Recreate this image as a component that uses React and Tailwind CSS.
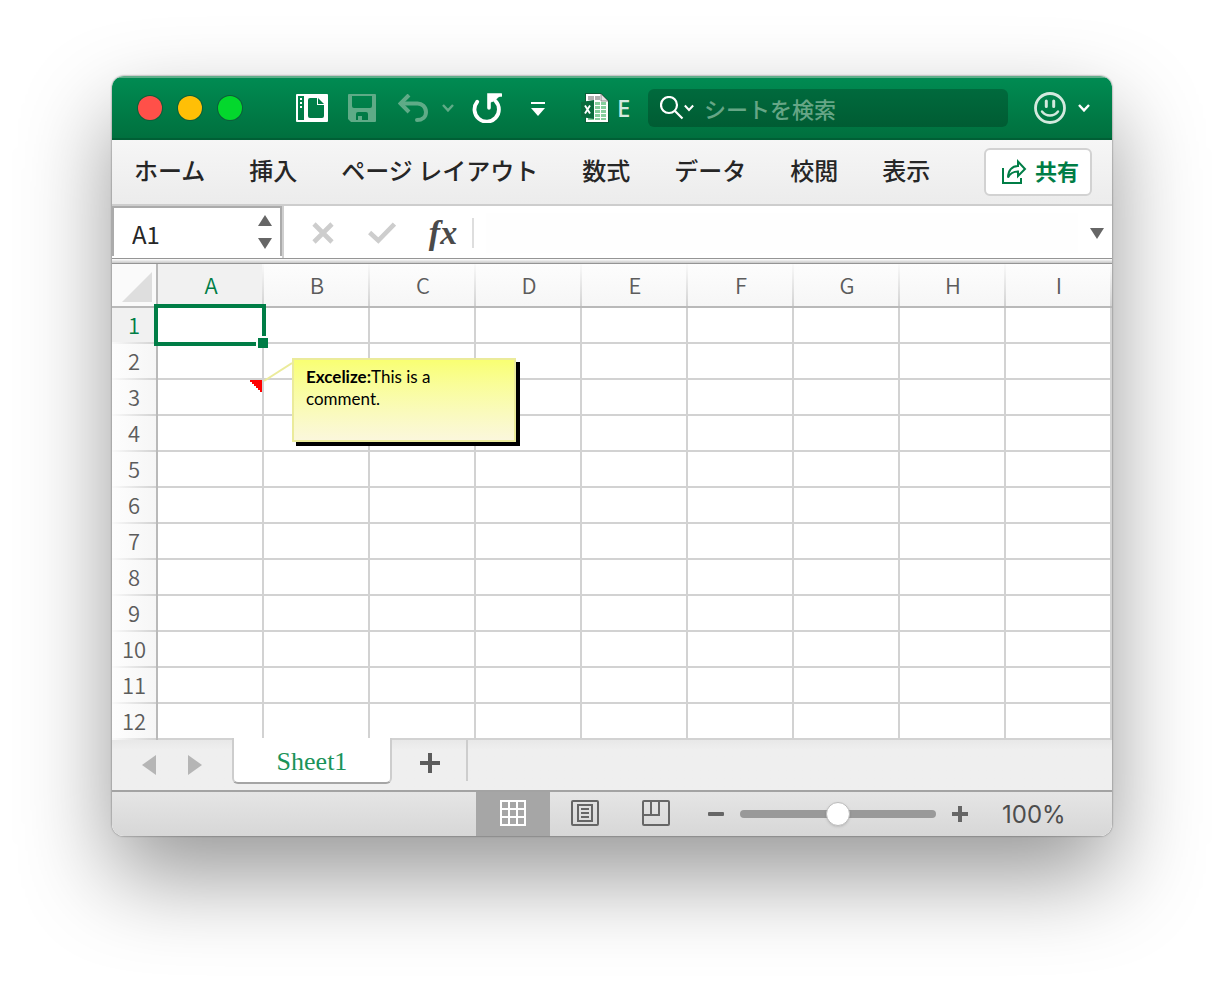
import React, { useState } from 'react';
import clsx from 'clsx';

const COLUMNS = ['A', 'B', 'C', 'D', 'E', 'F', 'G', 'H', 'I'];
const ROWS = Array.from({ length: 12 }, (_, i) => i + 1);
const TABS = ['ホーム', '挿入', 'ページ レイアウト', '数式', 'データ', '校閲', '表示'];

function Chevron({ className }) {
  return (
    <svg viewBox="0 0 12 8" className={clsx('w-3 h-2', className)} fill="none" stroke="currentColor" strokeWidth="2.4">
      <path d="M1 1l5 5.4L11 1" />
    </svg>
  );
}

function SidebarIcon() {
  return (
    <svg viewBox="0 0 32 28" className="w-8 h-7">
      <path
        fill="#fff"
        fillRule="evenodd"
        d="M1 0h30a1 1 0 0 1 1 1v26a1 1 0 0 1-1 1H1a1 1 0 0 1-1-1V1a1 1 0 0 1 1-1zM2 2v24h6V2zM14 4a2 2 0 0 0-2 2v16a2 2 0 0 0 2 2h12a2 2 0 0 0 2-2V11h-7V4z"
      />
      <path fill="#007d46" d="M22 4l6 6h-6z" />
      <path fill="#fff" d="M4 4h2v2H4zM4 8h2v2H4zM4 12h2v2H4z" />
    </svg>
  );
}

function SaveIcon() {
  return (
    <svg viewBox="0 0 28 28" className="w-7 h-7 text-[#5fab87]">
      <path
        fill="currentColor"
        fillRule="evenodd"
        d="M1 0h26a1 1 0 0 1 1 1v26a1 1 0 0 1-1 1H3l-3-3V1a1 1 0 0 1 1-1zM4 2v10a2 2 0 0 0 2 2h16a2 2 0 0 0 2-2V2zM8 26h2v-4h4v4h6v-6a2 2 0 0 0-2-2h-8a2 2 0 0 0-2 2z"
      />
    </svg>
  );
}

function UndoIcon() {
  return (
    <svg viewBox="0 0 30 28" className="w-[30px] h-7 text-[#5fab87]" fill="none" stroke="currentColor" strokeWidth="4">
      <path d="M11 1L2.500 9.500l8.500 8.500" />
      <path d="M3 9.500h16a8.500 8.500 0 0 1 9 8.500c0 5-4 8-9 8" strokeLinecap="round" />
    </svg>
  );
}

function RedoIcon() {
  return (
    <svg viewBox="0 0 30 30" className="w-[30px] h-[30px]" fill="none" stroke="#fff">
      <path d="M5.200 8.800A12.200 12.200 0 1 0 23.500 8" strokeWidth="3.800" strokeLinecap="round" />
      <path d="M17 15V2h12" strokeWidth="3.600" strokeLinecap="round" />
      <path d="M17 2h11.500l-6 5.500-5 2z" fill="#fff" strokeWidth="1" />
    </svg>
  );
}

function WorkbookIcon() {
  return (
    <svg viewBox="0 0 28 30" className="w-7 h-[30px]">
      <path d="M4 0h16l8 8v22H4z" fill="#0b5c37" />
      <path d="M5 1h15l7 7v21H5z" fill="#fff" />
      <path d="M7 3h6v4H7zM14 3h5v4h-5z" fill="#b0b0b0" />
      <path d="M20 1v7h7z" fill="#e4e4e4" stroke="#777" strokeWidth=".8" />
      <path
        d="M14 9h5v3h-5zM20 9h5v3h-5zM14 13h5v3h-5zM20 13h5v3h-5zM14 17h5v3h-5zM20 17h5v3h-5zM14 21h5v3h-5zM20 21h5v3h-5zM7 25h6v2H7zM14 25h5v2h-5zM20 25h5v2h-5z"
        fill="#86cf9d"
      />
      <path d="M0 9l13-2v19L0 24z" fill="#0a6b3d" />
      <path d="M4 12.500l5 8M9 12.500l-5 8" stroke="#fff" strokeWidth="1.900" />
    </svg>
  );
}

function SmileIcon() {
  return (
    <svg viewBox="0 0 32 32" className="w-8 h-8" fill="none" stroke="#d3e9de">
      <circle cx="16" cy="16" r="14.500" strokeWidth="2.800" />
      <path d="M12.300 9v5.500M19.700 9v5.500" strokeWidth="3" strokeLinecap="round" />
      <path d="M8 19.500c4 5.300 12 5.300 16 0" strokeWidth="2.400" strokeLinecap="round" />
    </svg>
  );
}

function TitleBar() {
  return (
    <header className="flex items-center h-16 pl-[26px] pr-[22px] text-white bg-linear-to-b from-[#008b52] to-[#00703e] border-t-2 border-t-[#5fae8a] border-b-2 border-b-[#005f35]">
      <div className="flex gap-4">
        <button aria-label="Close" className="size-6 rounded-full bg-[#ff5049] ring-1 ring-[#0b5f3a]" />
        <button aria-label="Minimize" className="size-6 rounded-full bg-[#ffbf06] ring-1 ring-[#0b5f3a]" />
        <button aria-label="Zoom window" className="size-6 rounded-full bg-[#03d82d] ring-1 ring-[#0b5f3a]" />
      </div>
      <div className="flex items-center ml-[54px]">
        <button aria-label="Gallery"><SidebarIcon /></button>
        <button aria-label="Save" className="ml-5"><SaveIcon /></button>
        <button aria-label="Undo" className="ml-[22px]"><UndoIcon /></button>
        <button aria-label="Undo list" className="ml-[14px] text-[#5fab87]"><Chevron /></button>
        <button aria-label="Redo" className="ml-[18px]"><RedoIcon /></button>
        <button aria-label="Customize toolbar" className="ml-7">
          <svg viewBox="0 0 16 16" className="size-4" fill="#fff">
            <path d="M1 2h14v2H1zM1 8h14l-7 8z" />
          </svg>
        </button>
      </div>
      <div className="flex items-center ml-[35px] gap-2">
        <WorkbookIcon />
        <span className="w-3 font-['Noto_Sans'] text-2xl leading-8 font-medium text-[#d3e9de]">E</span>
      </div>
      <div className="flex flex-1 items-center min-w-0 h-[38px] ml-[19px] mr-[26px] pl-3 rounded-md bg-linear-to-b from-[#006a3d] to-[#005c33]">
        <svg viewBox="0 0 24 24" className="size-6 shrink-0" fill="none" stroke="#fff" strokeWidth="2.200">
          <circle cx="9" cy="9" r="8" />
          <path d="M15 15l7.500 7.500" />
        </svg>
        <Chevron className="shrink-0 w-[10px]" />
        <input
          type="text"
          aria-label="シートを検索"
          placeholder="シートを検索"
          className="flex-1 min-w-0 ml-[10px] text-[22px] font-medium text-white placeholder:font-medium placeholder:text-[#66a686] focus:outline-none"
        />
      </div>
      <button aria-label="Feedback" className="flex items-center gap-3">
        <SmileIcon />
        <Chevron />
      </button>
    </header>
  );
}

function Ribbon() {
  return (
    <nav className="flex items-center justify-between h-[66px] pl-[22px] pr-5 bg-linear-to-b from-[#f6f6f6] to-[#ececec] border-b-2 border-[#cdcdcd]">
      <div className="flex gap-11">
        {TABS.map((tab) => (
          <button key={tab} className="pb-1 text-2xl font-medium text-[#262626] whitespace-nowrap">
            {tab}
          </button>
        ))}
      </div>
      <button className="flex items-center gap-2 h-12 pl-[15px] pr-[11px] rounded-md bg-white border-2 border-[#d2d2d2] text-[22px] font-bold text-[#007d46] whitespace-nowrap">
        <svg viewBox="0 0 26 26" className="size-[26px]" fill="none" stroke="currentColor" strokeWidth="2">
          <path d="M2 9v15h18v-5" />
          <path d="M7 18.500c0-7 4-11.500 10-11.500V2.500l7 7.500-7 7v-4.500c-5 0-8 2-10 6z" />
        </svg>
        <span className="pb-1">共有</span>
      </button>
    </nav>
  );
}

function FormulaBar({ name, setName }) {
  return (
    <div className="flex h-[52px] bg-white">
      <div className="flex shrink-0 w-[172px] bg-white border-r-2 border-[#cfcfcf]">
        <div className="flex flex-1 items-center min-w-0 h-[50px] pl-[18px] pr-2 border-2 border-b-0 border-[#ababab]">
          <input
            type="text"
            aria-label="Name box"
            value={name}
            onChange={(e) => setName(e.target.value)}
            className="flex-1 min-w-0 pt-1 text-2xl text-[#262626] focus:outline-none"
          />
          <div className="flex flex-col gap-3 text-[#666]">
            <button aria-label="Previous name">
              <svg viewBox="0 0 14 11" className="w-[14px] h-[11px]" fill="currentColor"><path d="M7 0l7 11H0z" /></svg>
            </button>
            <button aria-label="Next name">
              <svg viewBox="0 0 14 11" className="w-[14px] h-[11px]" fill="currentColor"><path d="M0 0h14L7 11z" /></svg>
            </button>
          </div>
        </div>
      </div>
      <div className="flex flex-1 items-center min-w-0 pl-7 pr-2 pt-0.5">
        <button aria-label="Cancel">
          <svg viewBox="0 0 22 22" className="size-[22px]" stroke="#cdcdcd" strokeWidth="4.600">
            <path d="M2 2l18 18M20 2L2 20" />
          </svg>
        </button>
        <button aria-label="Enter" className="ml-[34px]">
          <svg viewBox="0 0 28 22" className="w-7 h-[22px]" fill="none" stroke="#cdcdcd" strokeWidth="4.600">
            <path d="M1.600 10.500l8.700 8L26.400 2" />
          </svg>
        </button>
        <button className="ml-8 w-[30px] font-['Liberation_Serif'] text-[34px] leading-8 font-bold italic text-[#4a4a4a]">
          fx
        </button>
        <div className="w-0.5 h-[30px] ml-[14px] bg-[#dedede]" />
        <input type="text" aria-label="Formula" className="flex-1 min-w-0 h-10 mx-3 bg-[#fefefe] focus:outline-none" />
        <button aria-label="Expand formula bar">
          <svg viewBox="0 0 14 11" className="w-[14px] h-[11px]" fill="#666"><path d="M0 0h14L7 11z" /></svg>
        </button>
      </div>
    </div>
  );
}

function CellComment() {
  return (
    <>
      <svg viewBox="0 0 12 12" className="absolute top-0 right-0 size-3" fill="#f00" shapeRendering="crispEdges">
        <path d="M0 0h12v12h-2v-2h-2v-2h-2v-2h-2v-2h-2v-2h-2z" />
      </svg>
      <svg viewBox="0 0 30 20" className="absolute z-10 left-full -top-[18px] w-[30px] h-5" stroke="#ebeb9b" strokeWidth="2">
        <path d="M2 19L30 1" />
      </svg>
      <div className="absolute z-10 left-[134px] -top-[22px] w-56 h-[84px] pl-3 pr-11 py-1.5 border-2 border-[#ebeb9b] bg-linear-to-b from-[#f9ff72] to-[#fbf7dc] shadow-[4px_4px_0_#000] text-left font-['Lato'] text-[17px] leading-[22px] text-black">
        <b>Excelize:</b>This is a comment.
      </div>
    </>
  );
}

function Selection() {
  return (
    <div className="absolute z-10 -inset-1 border-4 border-[#007d46]">
      <span className="absolute -right-1.5 -bottom-1.5 size-3 border-t-2 border-l-2 border-white bg-[#007d46]" />
    </div>
  );
}

function Grid() {
  return (
    <table className="w-full table-fixed border-separate border-spacing-0 bg-white text-[22px] text-[#5c5c5c]">
      <thead>
        <tr className="h-11">
          <th className="w-[46px] p-0 border-r-2 border-b-2 border-[#b9b9b9] bg-[#fafafa]">
            <svg viewBox="0 0 30 30" className="size-[30px] ml-[10px] mt-1" fill="#dedede" aria-label="Select all">
              <path d="M30 0v30H0z" />
            </svg>
          </th>
          {COLUMNS.map((col) => (
            <th
              key={col}
              scope="col"
              className={clsx(
                'relative p-0 pb-0.5 border-b-2 border-[#b9b9b9] font-[350] leading-8 after:absolute after:inset-y-0 after:right-0 after:w-0.5 after:bg-linear-to-b after:from-[#fafafa] after:to-[#d2d2d2]',
                col === 'A' ? 'bg-[#f1f1f1] text-[#007d46]' : 'bg-linear-to-b from-[#fdfdfd] to-[#f6f6f6]'
              )}
            >
              {col}
            </th>
          ))}
        </tr>
      </thead>
      <tbody>
        {ROWS.map((row) => (
          <tr key={row} className="h-9">
            <th
              scope="row"
              className={clsx(
                'relative p-0 pb-1 border-r-2 border-[#b9b9b9] font-[350] leading-8 after:absolute after:inset-x-0 after:bottom-0 after:h-0.5 after:bg-linear-to-r after:from-[#fafafa] after:to-[#d2d2d2]',
                row === 1 ? 'bg-[#f1f1f1] text-[#007d46]' : 'bg-linear-to-r from-[#fdfdfd] to-[#f6f6f6]'
              )}
            >
              {row}
            </th>
            {COLUMNS.map((col) => (
              <td key={col} className="relative p-0 border-r-2 border-b-2 border-[#d2d2d2]">
                {col === 'A' && row === 1 && <Selection />}
                {col === 'A' && row === 3 && <CellComment />}
              </td>
            ))}
          </tr>
        ))}
      </tbody>
    </table>
  );
}

function SheetTabs() {
  return (
    <div className="flex h-[50px] pl-[30px] bg-linear-to-b from-[#e8e8e8] to-[#efefef] to-20%">
      <div className="flex items-center gap-8 text-[#b5b5b5]">
        <button aria-label="Previous sheet">
          <svg viewBox="0 0 14 20" className="w-[14px] h-5" fill="currentColor"><path d="M14 0v20L0 10z" /></svg>
        </button>
        <button aria-label="Next sheet">
          <svg viewBox="0 0 14 20" className="w-[14px] h-5" fill="currentColor"><path d="M0 0v20l14-10z" /></svg>
        </button>
      </div>
      <button className="relative z-10 w-40 h-[46px] -mt-0.5 ml-[30px] pt-1 rounded-b-md bg-white border-2 border-t-0 border-[#cdcdcd] border-b-[#a5a5a5] font-['Liberation_Serif'] text-[26px] leading-8 text-[#1a9359]">
        Sheet1
      </button>
      <button aria-label="Add sheet" className="w-[74px] pl-[28px] pb-1">
        <svg viewBox="0 0 20 20" className="size-5" fill="#5c5c5c"><path d="M8 0h4v8h8v4h-8v8H8v-8H0V8h8z" /></svg>
      </button>
      <div className="w-0.5 h-[41px] bg-[#cdcdcd]" />
    </div>
  );
}

function StatusBar() {
  const [zoom, setZoom] = useState(100);

  return (
    <footer className="flex items-center justify-end h-[46px] pr-12 border-t-2 border-[#a3a3a3] bg-linear-to-b from-[#e5e5e5] to-[#d7d7d7]">
      <button aria-label="Normal view" className="flex items-center justify-center w-[74px] h-full pb-0.5 bg-[#a6a6a6]">
        <svg viewBox="0 0 26 26" className="size-[26px]" fill="none" stroke="#fff" strokeWidth="2">
          <path d="M1 1h24v24H1zM9 1v24M17 1v24M1 9h24M1 17h24" />
        </svg>
      </button>
      <button aria-label="Page layout view" className="flex items-center justify-center w-[70px] h-full pb-0.5">
        <svg viewBox="0 0 28 26" className="w-7 h-[26px]" fill="none" stroke="#666" strokeWidth="2">
          <rect x="1" y="1" width="26" height="24" rx="1" />
          <path d="M7 5h14v16H7zM10 9h8M10 13h8M10 17h8" />
        </svg>
      </button>
      <button aria-label="Page break view" className="flex items-center justify-center w-[72px] h-full pb-0.5">
        <svg viewBox="0 0 28 26" className="w-7 h-[26px]" fill="none" stroke="#666" strokeWidth="2">
          <rect x="1" y="1" width="26" height="24" rx="1" />
          <path d="M1 15h16V1M9 1v14" />
        </svg>
      </button>
      <button aria-label="Zoom out" className="ml-4" onClick={() => setZoom(Math.max(0, zoom - 10))}>
        <svg viewBox="0 0 16 16" className="size-4" fill="#666"><rect y="6" width="16" height="4" rx="1" /></svg>
      </button>
      <input
        type="range"
        aria-label="Zoom"
        min="0"
        max="200"
        value={zoom}
        onChange={(e) => setZoom(Number(e.target.value))}
        className="w-[196px] h-2 mx-4 appearance-none rounded-full bg-[#999] [&::-webkit-slider-thumb]:appearance-none [&::-webkit-slider-thumb]:size-6 [&::-webkit-slider-thumb]:rounded-full [&::-webkit-slider-thumb]:bg-white [&::-webkit-slider-thumb]:border [&::-webkit-slider-thumb]:border-[#bbb] [&::-webkit-slider-thumb]:shadow-sm"
      />
      <button aria-label="Zoom in" onClick={() => setZoom(Math.min(200, zoom + 10))}>
        <svg viewBox="0 0 16 16" className="size-4" fill="#666"><path d="M6 0h4v6h6v4h-6v6H6v-6H0V6h6z" /></svg>
      </button>
      <button className="w-[62px] ml-[34px] pt-0.5 text-left font-['Inter'] text-2xl text-[#4d4d4d]">{zoom}%</button>
    </footer>
  );
}

export default function App() {
  const [name, setName] = useState('A1');

  return (
    <main className="min-h-screen bg-white px-28 pt-19 pb-28 font-['Noto_Sans_CJK_JP',sans-serif]">
      <div className="rounded-xl shadow-[0_0_2px_rgba(0,0,0,0.6),0_40px_90px_rgba(0,0,0,0.41)]">
        <div className="overflow-hidden rounded-xl bg-white">
          <TitleBar />
          <Ribbon />
          <FormulaBar name={name} setName={setName} />
          <div className="h-1.5 border-y border-[#959595] bg-linear-to-b from-white to-[#c8c8c8]" />
          <Grid />
          <SheetTabs />
          <StatusBar />
        </div>
      </div>
    </main>
  );
}
